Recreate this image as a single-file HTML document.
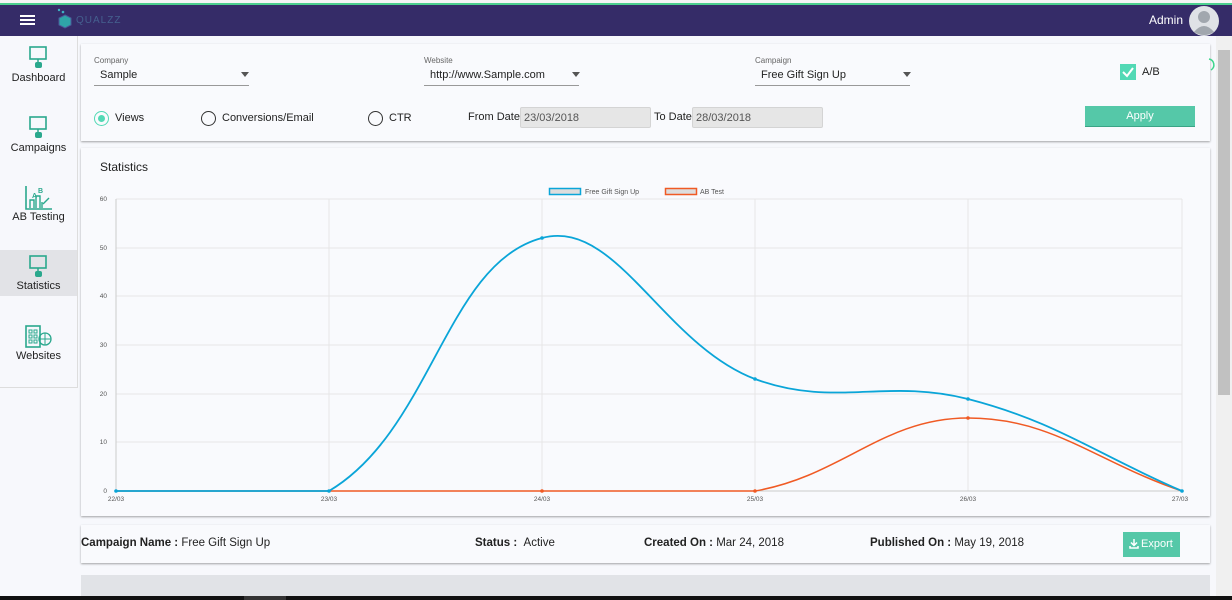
<!DOCTYPE html>
<html><head><meta charset="utf-8"><style>
*{margin:0;padding:0;box-sizing:border-box}
body{width:1232px;height:600px;overflow:hidden;background:#f7f8fc;font-family:"Liberation Sans",sans-serif;color:#222;position:relative}
.abs{position:absolute}
.top{left:0;top:0;width:1232px;height:5px;background:#f4f6f5;border-bottom:2px solid #4cd08f}
.nav{left:0;top:5px;width:1232px;height:31px;background:#352c68}
.side{left:0;top:36px;width:78px;height:352px;background:#f7f8fc;border-right:1px solid #ddd;border-bottom:1px solid #ddd}
.side .it{position:absolute;left:0;width:77px;text-align:center;font-size:11px;color:#222}
.card{background:#f9fafd;box-shadow:0 1px 2px rgba(0,0,0,.35)}
.lbl{font-size:8px;color:#666}
.sel{font-size:11px;color:#222}
.ul{height:1px;background:#999}
.tri{width:0;height:0;border-left:4px solid transparent;border-right:4px solid transparent;border-top:5px solid #555}
.radio{width:15px;height:15px;border-radius:50%;border:1.5px solid #333}
.t12{font-size:11px}
.inp{background:#e6e6e6;border:1px solid #d4d4d4;border-radius:2px;font-size:11px;color:#555;padding:4px 3px}
</style></head><body>
<div class="abs top"></div>
<div class="abs nav">
 <div class="abs" style="left:20px;top:10px;width:15px;height:2px;background:#fff;box-shadow:0 4px 0 #fff,0 8px 0 #fff"></div>
 <svg class="abs" style="left:55px;top:2px" width="20" height="24"><circle cx="4" cy="3" r="1.2" fill="#3bb3c4"/><circle cx="8" cy="5" r="1.3" fill="#3bb3c4"/><polygon points="10,8 16,11 16,18 10,21 4,18 4,11" fill="#2fa5a8" stroke="#4a5a9a" stroke-width="1"/></svg>
 <div class="abs" style="left:76px;top:10px;font-size:10px;color:#45608f;letter-spacing:1px">QUALZZ</div>
 <div class="abs" style="left:1149px;top:8px;font-size:12px;color:#fff">Admin</div>
 <svg class="abs" style="left:1188px;top:0" width="32" height="32"><circle cx="16" cy="16" r="15" fill="#dfe2e6"/><circle cx="16" cy="12" r="6" fill="#a1a7ae"/><path d="M6,27 Q16,15 26,27 Q16,33 6,27Z" fill="#a1a7ae"/></svg>
</div>
<div class="abs side">
 <div class="abs" style="left:0;top:214px;width:77px;height:46px;background:#e2e3e7"></div>
 <svg class="abs" style="left:29px;top:10px" width="20" height="24"><rect x="1" y="1" width="16" height="12" fill="none" stroke="#2aa88d" stroke-width="1.6"/><line x1="9" y1="13" x2="9" y2="16" stroke="#2aa88d" stroke-width="1.5"/><rect x="6" y="16" width="7" height="6" rx="2" fill="#2aa88d"/></svg>
 <div class="it" style="top:36px">Dashboard</div>
 <svg class="abs" style="left:29px;top:80px" width="20" height="24"><rect x="1" y="1" width="16" height="12" fill="none" stroke="#2aa88d" stroke-width="1.6"/><line x1="9" y1="13" x2="9" y2="16" stroke="#2aa88d" stroke-width="1.5"/><rect x="6" y="16" width="7" height="6" rx="2" fill="#2aa88d"/></svg>
 <div class="it" style="top:106px">Campaigns</div>
 <svg class="abs" style="left:25px;top:150px" width="28" height="24"><path d="M1,0 V23 H27" fill="none" stroke="#2aa88d" stroke-width="1.6"/><path d="M5,22 V14 H9 V22 M11,22 V10 H15 V22 M17,22 V16" fill="none" stroke="#2aa88d" stroke-width="1.4"/><text x="7" y="12" font-size="7" font-weight="bold" fill="#2aa88d" font-family="Liberation Sans">A</text><text x="13" y="7" font-size="7" font-weight="bold" fill="#2aa88d" font-family="Liberation Sans">B</text><path d="M18,18 L24,12" stroke="#2aa88d" stroke-width="1.4"/></svg>
 <div class="it" style="top:175px">AB Testing</div>
 <svg class="abs" style="left:29px;top:219px" width="20" height="24"><rect x="1" y="1" width="16" height="12" fill="none" stroke="#2aa88d" stroke-width="1.6"/><line x1="9" y1="13" x2="9" y2="16" stroke="#2aa88d" stroke-width="1.5"/><rect x="6" y="16" width="7" height="6" rx="2" fill="#2aa88d"/></svg>
 <div class="it" style="top:244px">Statistics</div>
 <svg class="abs" style="left:25px;top:289px" width="28" height="24"><rect x="1" y="1" width="14" height="21" fill="none" stroke="#2aa88d" stroke-width="1.6"/><path d="M4,5h3v3h-3z M9,5h3v3h-3z M4,10h3v3h-3z M9,10h3v3h-3z M4,15h3v3h-3z M9,15h3v3h-3z" fill="none" stroke="#2aa88d" stroke-width="1"/><circle cx="20" cy="14" r="6" fill="none" stroke="#2aa88d" stroke-width="1.3"/><path d="M14,14h12 M20,8v12" stroke="#2aa88d" stroke-width="1"/></svg>
 <div class="it" style="top:314px">Websites</div>
</div>

<div class="abs card" style="left:81px;top:44px;width:1129px;height:97px"></div>
<div class="abs lbl" style="left:94px;top:56px">Company</div>
<div class="abs sel" style="left:100px;top:69px">Sample</div>
<div class="abs tri" style="left:241px;top:72px"></div>
<div class="abs ul" style="left:94px;top:85px;width:155px"></div>
<div class="abs lbl" style="left:424px;top:56px">Website</div>
<div class="abs sel" style="left:430px;top:69px">http://www.Sample.com</div>
<div class="abs tri" style="left:572px;top:72px"></div>
<div class="abs ul" style="left:424px;top:85px;width:155px"></div>
<div class="abs lbl" style="left:755px;top:56px">Campaign</div>
<div class="abs sel" style="left:761px;top:69px">Free Gift Sign Up</div>
<div class="abs tri" style="left:903px;top:72px"></div>
<div class="abs ul" style="left:755px;top:85px;width:155px"></div>
<div class="abs" style="left:1120px;top:64px;width:16px;height:16px;background:#52d9b5"></div>
<svg class="abs" style="left:1120px;top:64px" width="16" height="16"><path d="M3,8 L7,12 L13,4" fill="none" stroke="#fff" stroke-width="2"/></svg>
<div class="abs t12" style="left:1142px;top:66px">A/B</div>
<svg class="abs" style="left:1206px;top:56px" width="14" height="18"><path d="M3,3 A6,6 0 0 1 5,14" fill="none" stroke="#3dd68c" stroke-width="1.5"/></svg>

<div class="abs radio" style="left:94px;top:111px;border-color:#52d9b5"></div>
<div class="abs" style="left:98px;top:115px;width:7px;height:7px;border-radius:50%;background:#52d9b5"></div>
<div class="abs t12" style="left:115px;top:112px">Views</div>
<div class="abs radio" style="left:201px;top:111px"></div>
<div class="abs t12" style="left:222px;top:112px">Conversions/Email</div>
<div class="abs radio" style="left:368px;top:111px"></div>
<div class="abs t12" style="left:389px;top:112px">CTR</div>
<div class="abs t12" style="left:468px;top:111px">From Date</div>
<div class="abs inp" style="left:520px;top:107px;width:131px;height:21px">23/03/2018</div>
<div class="abs t12" style="left:654px;top:111px">To Date</div>
<div class="abs inp" style="left:692px;top:107px;width:131px;height:21px">28/03/2018</div>
<div class="abs" style="left:1085px;top:106px;width:110px;height:21px;background:#55c8a8;color:#fff;font-size:11px;text-align:center;line-height:21px;border-bottom:1px solid #3aa486">Apply</div>

<div class="abs card" style="left:81px;top:148px;width:1129px;height:368px"></div>
<div class="abs" style="left:100px;top:160px;font-size:12px">Statistics</div>
<svg class="abs" style="left:81px;top:148px" width="1129" height="368" viewBox="81 148 1129 368" font-family="Liberation Sans">
 <g stroke="#e6e6e6" stroke-width="1">
  <line x1="116" y1="199" x2="1182" y2="199"/><line x1="116" y1="248" x2="1182" y2="248"/><line x1="116" y1="296" x2="1182" y2="296"/><line x1="116" y1="345" x2="1182" y2="345"/><line x1="116" y1="394" x2="1182" y2="394"/><line x1="116" y1="442" x2="1182" y2="442"/>
  <line x1="329" y1="199" x2="329" y2="491"/><line x1="542" y1="199" x2="542" y2="491"/><line x1="755" y1="199" x2="755" y2="491"/><line x1="968" y1="199" x2="968" y2="491"/><line x1="1182" y1="199" x2="1182" y2="491"/>
 </g>
 <line x1="116" y1="199" x2="116" y2="491" stroke="#ccc"/>
 <line x1="116" y1="491" x2="1182" y2="491" stroke="#ccc"/>
 <g font-size="6.5" fill="#555" text-anchor="end">
  <text x="107" y="201">60</text><text x="107" y="250">50</text><text x="107" y="298">40</text><text x="107" y="347">30</text><text x="107" y="396">20</text><text x="107" y="444">10</text><text x="107" y="493">0</text>
 </g>
 <g font-size="6.5" fill="#555" text-anchor="middle">
  <text x="116" y="501">22/03</text><text x="329" y="501">23/03</text><text x="542" y="501">24/03</text><text x="755" y="501">25/03</text><text x="968" y="501">26/03</text><text x="1180" y="501">27/03</text>
 </g>
 <rect x="549.5" y="188.5" width="31" height="6" fill="#ddd" stroke="#0aa5d8" stroke-width="1.5"/>
 <text x="585" y="194" font-size="7" fill="#555">Free Gift Sign Up</text>
 <rect x="665.5" y="188.5" width="31" height="6" fill="#ddd" stroke="#f05a24" stroke-width="1.5"/>
 <text x="700" y="194" font-size="7" fill="#555">AB Test</text>
 <path d="M116,491 L755,491 C842,476 883,418 968,418 C1053,418 1096,462 1182,491" fill="none" stroke="#f05a24" stroke-width="1.5"/>
 <path d="M116,491 L329,491 C432,430 446,263 542,238 C616,218 663,344 755,379 C833,408 886,378 968,399 C1057,422 1096,454 1182,491" fill="none" stroke="#0aa5d8" stroke-width="1.8"/>
 <g fill="#0aa5d8"><circle cx="116" cy="491" r="1.8"/><circle cx="329" cy="491" r="1.8"/><circle cx="542" cy="238" r="1.8"/><circle cx="755" cy="379" r="1.8"/><circle cx="968" cy="399" r="1.8"/><circle cx="1182" cy="491" r="1.8"/></g>
 <g fill="#f05a24"><circle cx="542" cy="491" r="1.8"/><circle cx="755" cy="491" r="1.8"/><circle cx="968" cy="418" r="1.8"/></g>
</svg>

<div class="abs card" style="left:81px;top:525px;width:1129px;height:38px"></div>
<div class="abs" style="left:81px;top:537px;font-size:11.5px"><b>Campaign Name :</b> Free Gift Sign Up</div>
<div class="abs" style="left:475px;top:537px;font-size:11.5px"><b>Status :</b> &nbsp;Active</div>
<div class="abs" style="left:644px;top:537px;font-size:11.5px"><b>Created On :</b> Mar 24, 2018</div>
<div class="abs" style="left:870px;top:537px;font-size:11.5px"><b>Published On :</b> May 19, 2018</div>
<div class="abs" style="left:1123px;top:532px;width:57px;height:25px;background:#55c8a8;color:#fff;font-size:11px;line-height:24px;padding-left:18px">Export</div>
<svg class="abs" style="left:1128px;top:538px" width="12" height="12"><path d="M6,1 V7 M3,4.5 L6,7.5 L9,4.5 M2,8 V10 H10 V8" fill="none" stroke="#fff" stroke-width="1.5"/></svg>

<div class="abs" style="left:81px;top:575px;width:1129px;height:21px;background:#e1e3e7"></div>
<div class="abs" style="left:1216px;top:36px;width:16px;height:560px;background:#f0f0f0"></div>
<div class="abs" style="left:1218px;top:50px;width:12px;height:345px;background:#c1c1c1"></div>
<div class="abs" style="left:0;top:596px;width:1232px;height:4px;background:#111"></div>
<div class="abs" style="left:244px;top:596px;width:42px;height:4px;background:#333"></div>
</body></html>
